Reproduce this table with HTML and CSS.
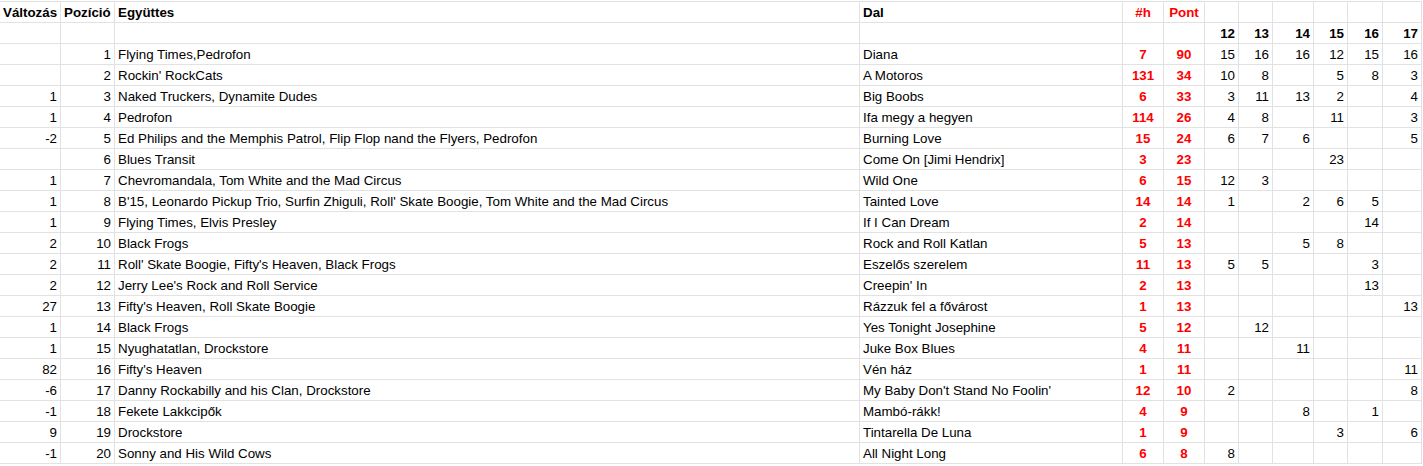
FILE: index.html
```html
<!DOCTYPE html>
<html lang="hu">
<head>
<meta charset="utf-8">
<title>Toplista</title>
<link rel="stylesheet" href="styles.css">
</head>
<body>
<table class="sheet">
<colgroup>
<col class="c-chg"><col class="c-pos"><col class="c-band"><col class="c-song"><col class="c-h"><col class="c-pt">
<col class="c-w34"><col class="c-w34"><col class="c-w41"><col class="c-w34"><col class="c-w35"><col class="c-w39">
</colgroup>
<tbody>
<tr class="head"><td class="l">Változás</td><td class="l">Pozíció</td><td class="l">Együttes</td><td class="l">Dal</td><td class="red bl">#h</td><td class="red bl">Pont</td><td class="bl"></td><td></td><td></td><td></td><td></td><td></td></tr>
<tr class="head"><td></td><td></td><td></td><td></td><td class="bl"></td><td class="bl"></td><td class="bl">12</td><td>13</td><td>14</td><td>15</td><td>16</td><td>17</td></tr>
<tr><td></td><td>1</td><td class="l">Flying Times,Pedrofon</td><td class="l">Diana</td><td class="red bl">7</td><td class="red bl">90</td><td class="bl">15</td><td>16</td><td>16</td><td>12</td><td>15</td><td>16</td></tr>
<tr><td></td><td>2</td><td class="l">Rockin' RockCats</td><td class="l">A Motoros</td><td class="red bl">131</td><td class="red bl">34</td><td class="bl">10</td><td>8</td><td></td><td>5</td><td>8</td><td>3</td></tr>
<tr><td>1</td><td>3</td><td class="l">Naked Truckers, Dynamite Dudes</td><td class="l">Big Boobs</td><td class="red bl">6</td><td class="red bl">33</td><td class="bl">3</td><td>11</td><td>13</td><td>2</td><td></td><td>4</td></tr>
<tr><td>1</td><td>4</td><td class="l">Pedrofon</td><td class="l">Ifa megy a hegyen</td><td class="red bl">114</td><td class="red bl">26</td><td class="bl">4</td><td>8</td><td></td><td>11</td><td></td><td>3</td></tr>
<tr><td>-2</td><td>5</td><td class="l">Ed Philips and the Memphis Patrol, Flip Flop nand the Flyers, Pedrofon</td><td class="l">Burning Love</td><td class="red bl">15</td><td class="red bl">24</td><td class="bl">6</td><td>7</td><td>6</td><td></td><td></td><td>5</td></tr>
<tr><td></td><td>6</td><td class="l">Blues Transit</td><td class="l">Come On [Jimi Hendrix]</td><td class="red bl">3</td><td class="red bl">23</td><td class="bl"></td><td></td><td></td><td>23</td><td></td><td></td></tr>
<tr><td>1</td><td>7</td><td class="l">Chevromandala, Tom White and the Mad Circus</td><td class="l">Wild One</td><td class="red bl">6</td><td class="red bl">15</td><td class="bl">12</td><td>3</td><td></td><td></td><td></td><td></td></tr>
<tr><td>1</td><td>8</td><td class="l">B'15, Leonardo Pickup Trio, Surfin Zhiguli, Roll' Skate Boogie, Tom White and the Mad Circus</td><td class="l">Tainted Love</td><td class="red bl">14</td><td class="red bl">14</td><td class="bl">1</td><td></td><td>2</td><td>6</td><td>5</td><td></td></tr>
<tr><td>1</td><td>9</td><td class="l">Flying Times, Elvis Presley</td><td class="l">If I Can Dream</td><td class="red bl">2</td><td class="red bl">14</td><td class="bl"></td><td></td><td></td><td></td><td>14</td><td></td></tr>
<tr><td>2</td><td>10</td><td class="l">Black Frogs</td><td class="l">Rock and Roll Katlan</td><td class="red bl">5</td><td class="red bl">13</td><td class="bl"></td><td></td><td>5</td><td>8</td><td></td><td></td></tr>
<tr><td>2</td><td>11</td><td class="l">Roll' Skate Boogie, Fifty's Heaven, Black Frogs</td><td class="l">Eszelős szerelem</td><td class="red bl">11</td><td class="red bl">13</td><td class="bl">5</td><td>5</td><td></td><td></td><td>3</td><td></td></tr>
<tr><td>2</td><td>12</td><td class="l">Jerry Lee's Rock and Roll Service</td><td class="l">Creepin' In</td><td class="red bl">2</td><td class="red bl">13</td><td class="bl"></td><td></td><td></td><td></td><td>13</td><td></td></tr>
<tr><td>27</td><td>13</td><td class="l">Fifty's Heaven, Roll Skate Boogie</td><td class="l">Rázzuk fel a fővárost</td><td class="red bl">1</td><td class="red bl">13</td><td class="bl"></td><td></td><td></td><td></td><td></td><td>13</td></tr>
<tr><td>1</td><td>14</td><td class="l">Black Frogs</td><td class="l">Yes Tonight Josephine</td><td class="red bl">5</td><td class="red bl">12</td><td class="bl"></td><td>12</td><td></td><td></td><td></td><td></td></tr>
<tr><td>1</td><td>15</td><td class="l">Nyughatatlan, Drockstore</td><td class="l">Juke Box Blues</td><td class="red bl">4</td><td class="red bl">11</td><td class="bl"></td><td></td><td>11</td><td></td><td></td><td></td></tr>
<tr><td>82</td><td>16</td><td class="l">Fifty's Heaven</td><td class="l">Vén ház</td><td class="red bl">1</td><td class="red bl">11</td><td class="bl"></td><td></td><td></td><td></td><td></td><td>11</td></tr>
<tr><td>-6</td><td>17</td><td class="l">Danny Rockabilly and his Clan, Drockstore</td><td class="l">My Baby Don't Stand No Foolin'</td><td class="red bl">12</td><td class="red bl">10</td><td class="bl">2</td><td></td><td></td><td></td><td></td><td>8</td></tr>
<tr><td>-1</td><td>18</td><td class="l">Fekete Lakkcipők</td><td class="l">Mambó-rákk!</td><td class="red bl">4</td><td class="red bl">9</td><td class="bl"></td><td></td><td>8</td><td></td><td>1</td><td></td></tr>
<tr><td>9</td><td>19</td><td class="l">Drockstore</td><td class="l">Tintarella De Luna</td><td class="red bl">1</td><td class="red bl">9</td><td class="bl"></td><td></td><td></td><td>3</td><td></td><td>6</td></tr>
<tr><td>-1</td><td>20</td><td class="l">Sonny and His Wild Cows</td><td class="l">All Night Long</td><td class="red bl">6</td><td class="red bl">8</td><td class="bl">8</td><td></td><td></td><td></td><td></td><td></td></tr>
</tbody>
</table>
</body>
</html>
```

FILE: styles.css
```css
html, body {
  margin: 0;
  padding: 0;
  background: #fff;
}
body {
  padding-top: 1px;
}
.sheet {
  border-collapse: collapse;
  table-layout: fixed;
  width: 1422px;
  font-family: "Liberation Sans", Arial, sans-serif;
  font-size: 10pt;
  color: #000;
  border-top: 1px solid #cfcfcf;
  margin-left: -1px;
}
.c-chg { width: 61px; }
.c-pos { width: 54px; }
.c-band { width: 745px; }
.c-song { width: 263px; }
.c-h { width: 41px; }
.c-pt { width: 41px; }
.c-w34 { width: 34px; }
.c-w41 { width: 41px; }
.c-w35 { width: 35px; }
.c-w39 { width: 39px; }
.sheet td {
  height: 19px;
  padding: 1px 3px 0;
  border: 1px solid #e2e2e2;
  text-align: right;
  vertical-align: middle;
  white-space: nowrap;
  overflow: hidden;
  line-height: 16px;
}
.sheet td.l {
  text-align: left;
}
.sheet td.red {
  color: #ff0000;
  font-weight: bold;
  text-align: center;
}
.sheet td.bl {
  border-left: 1px solid #000;
}
.head td {
  font-weight: bold;
}
```
